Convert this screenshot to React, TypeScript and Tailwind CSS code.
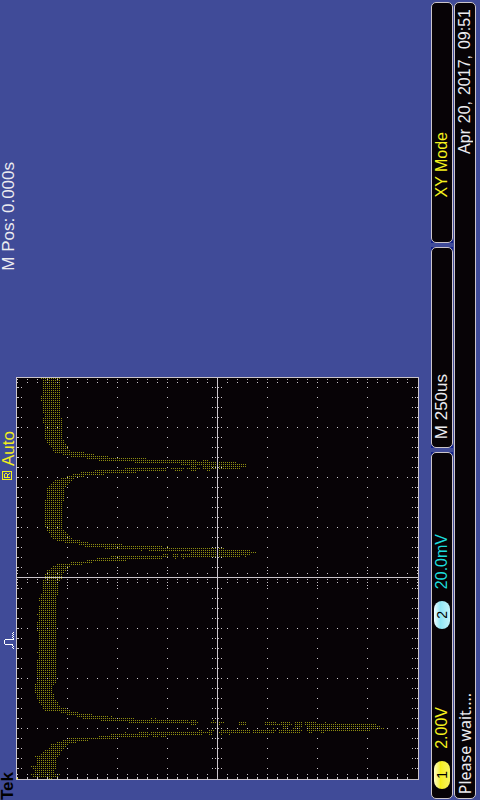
import React from "react";

type Span = [number, number];

/* Lit phosphor dots: row coordinate -> [first, last] runs, dots are two units apart. */
const runs: Record<number, Span[]> = {};
const put = (y: number, ...spans: Span[]) => {
  runs[y] = spans;
};
const fill = (from: number, to: number, a: number, b: number) => {
  for (let y = from; y <= to; y += 2) put(y, [a, b]);
};

fill(378, 394, 43, 59);
put(378, [41, 59]);
fill(396, 400, 41, 59);
fill(402, 412, 43, 59);
fill(414, 418, 45, 59);
fill(418, 422, 43, 61);
fill(424, 438, 45, 61);
put(440, [47, 63]);
put(442, [47, 63]);
put(444, [49, 65]);
put(446, [51, 67]);
put(448, [53, 67]);
put(450, [53, 69]);
put(452, [55, 83]);
put(454, [63, 93]);
put(456, [71, 107]);
put(458, [87, 145]);
put(460, [99, 195], [203, 207]);
put(462, [135, 235]);
put(464, [181, 245]);
put(466, [191, 195], [203, 245]);
put(468, [125, 165], [171, 183], [187, 199], [203, 239]);
put(470, [95, 165], [175, 181], [191, 195], [207, 209]);
put(472, [81, 135]);
put(474, [73, 103]);
put(476, [67, 83]);
put(478, [61, 73]);
put(480, [55, 71]);
put(482, [53, 69]);
put(484, [51, 67]);
put(486, [49, 65]);
fill(488, 498, 47, 63);
fill(500, 526, 45, 61);
put(500, [45, 63]);
put(528, [47, 61]);
put(530, [47, 63]);
put(532, [49, 65]);
put(534, [51, 67]);
put(536, [51, 69]);
put(538, [53, 71]);
put(540, [57, 79]);
put(542, [65, 87]);
put(544, [79, 121]);
put(546, [85, 161], [167, 167]);
put(548, [105, 223]);
put(550, [141, 141], [149, 249]);
put(552, [191, 255]);
put(554, [163, 167], [173, 177], [181, 249]);
put(556, [111, 167], [173, 177], [181, 239], [245, 245]);
put(558, [97, 161], [175, 175], [183, 183]);
put(560, [87, 125]);
put(562, [71, 91]);
put(564, [57, 81]);
put(566, [53, 69]);
put(568, [51, 67]);
put(570, [47, 65]);
put(572, [47, 63]);
fill(574, 578, 45, 61);
fill(580, 592, 43, 57);
put(580, [43, 59]);
put(594, [41, 57]);
put(596, [41, 55]);
fill(598, 600, 39, 55);
fill(602, 604, 41, 55);
fill(606, 612, 39, 55);
put(614, [37, 55]);
fill(616, 620, 39, 55);
fill(622, 630, 37, 55);
fill(632, 650, 39, 55);
fill(652, 682, 37, 55);
fill(654, 658, 39, 55);
fill(684, 692, 35, 51);
put(684, [35, 53]);
put(694, [37, 53]);
fill(696, 698, 37, 53);
put(700, [39, 55]);
put(702, [39, 57]);
put(704, [41, 57]);
put(706, [43, 59]);
put(708, [43, 67]);
put(710, [45, 69]);
put(712, [61, 77]);
put(714, [67, 91]);
put(716, [77, 107], [111, 111]);
put(718, [83, 133], [151, 151], [155, 155]);
put(720, [101, 187], [191, 195], [213, 213]);
put(722, [129, 197], [211, 223], [239, 245], [265, 275], [281, 289], [295, 301], [305, 315], [325, 325], [335, 335]);
put(724, [191, 195], [217, 219], [239, 245], [265, 291], [295, 301], [305, 375]);
put(726, [283, 287], [295, 301], [307, 379]);
put(728, [273, 273], [283, 287], [293, 299], [307, 383]);
put(730, [199, 201], [209, 213], [221, 249], [253, 275], [279, 301], [307, 369]);
put(732, [125, 125], [139, 147], [151, 211], [217, 249], [253, 273], [279, 299], [309, 311], [321, 323]);
put(734, [111, 201], [209, 211], [221, 221], [229, 229]);
put(736, [99, 147], [153, 157], [161, 165]);
put(738, [67, 115]);
put(740, [63, 87]);
put(742, [57, 75]);
put(744, [51, 67]);
put(746, [51, 65]);
put(748, [49, 63]);
put(750, [45, 61]);
put(752, [43, 59]);
put(754, [41, 59]);
put(756, [35, 57]);
fill(758, 764, 37, 55);
put(766, [31, 55]);
put(768, [33, 55]);
fill(770, 772, 35, 53);
put(774, [31, 59]);
put(776, [33, 57]);
put(778, [47, 51]);

const px = (x: number, y: number) => `M${x} ${y}h1v1h-1z`;

const traceParts: string[] = [];
for (const key of Object.keys(runs)) {
  const y = Number(key);
  for (const [a, b] of runs[y]) for (let x = a; x <= b; x += 2) traceParts.push(px(x, y));
}

const minorX = Array.from({ length: 40 }, (_, i) => 17 + i * 10);
const minorY = Array.from({ length: 40 }, (_, i) => (i <= 20 ? 377 : 378) + i * 10).slice(1);
const majorX = [67, 117, 167, 267, 317, 367];
const majorY = [427, 477, 527, 628, 678, 728];

const gridParts: string[] = [];
for (const y of minorY) {
  for (const x of [17, 18, 21, 212, 215, 218, 221, 412, 415, 417]) gridParts.push(px(x, y));
  for (const x of majorX) gridParts.push(px(x, y));
}
for (const x of minorX) {
  for (const y of [379, 382, 573, 579, 582, 774, 777, 778]) gridParts.push(px(x, y));
  for (const y of majorY) gridParts.push(px(x, y));
}
for (const x of [17, ...majorX, 417]) {
  for (const y of [567, 570, 573, 579, 582, 585, 588]) gridParts.push(px(x, y));
}

const tracePath = traceParts.join("");
const gridPath = gridParts.join("");

function Side({ children, className = "" }: { children: React.ReactNode; className?: string }) {
  return (
    <span className={`rotate-180 whitespace-pre [writing-mode:vertical-rl] ${className}`}>{children}</span>
  );
}

function Graticule() {
  return (
    <svg
      role="img"
      aria-label="XY waveform display"
      className="block h-[403px] w-[403px] shrink-0"
      viewBox="16 377 403 403"
      shapeRendering="crispEdges"
    >
      <rect x="16" y="377" width="403" height="403" fill="#cbc5cb" />
      <rect x="17" y="378" width="401" height="401" fill="#070306" />
      <path d={tracePath} fill="#8d8c10" />
      <path d={gridPath} fill="#cbc5cb" />
      <path d="M217 378h1v401h-1zM17 577h401v1h-401z" fill="#cbc5cb" />
      <path d="M17 778h1v1h-1z" fill="#f4ef1c" />
    </svg>
  );
}

function Channel({ id, scale, pill, text }: { id: string; scale: string; pill: string; text: string }) {
  return (
    <div className="flex h-40 flex-col-reverse items-center gap-3">
      <span className={`flex h-7 w-4 items-center justify-center rounded-full text-sm leading-4 text-black ${pill}`}>
        <Side>{id}</Side>
      </span>
      <Side className={text}>{scale}</Side>
    </div>
  );
}

const box =
  "flex h-full w-full flex-col-reverse items-center rounded-[5px] border border-[#cbc5cb] bg-[#070306]";

export default function App() {
  return (
    <main className="flex h-screen w-full overflow-hidden bg-[#404b98] font-['Liberation_Sans',sans-serif] text-base leading-5 text-[#ececf0]">
      <header className="flex w-4 shrink-0 flex-col-reverse items-start text-[17px] leading-[18px]">
        <Side className="h-8 text-[17px] leading-4 font-bold text-black">Tek</Side>
        <svg
          className="mb-[118px] h-[18px] w-4 shrink-0"
          viewBox="0 632 16 18"
          shapeRendering="crispEdges"
          aria-hidden="true"
        >
          <path
            d="M13 632h1v1h-1zM12 633h1v1h-1zM13 634h1v1h-1zM12 635h1v1h-1zM13 636h1v1h-1zM12 637h1v1h-1zM13 638h1v1h-1zM5 639h9v1H5zM4 640h1v4H4zM5 644h8v1H5zM12 645h1v1h-1zM13 646h1v1h-1zM12 647h1v1h-1zM13 648h1v1h-1z"
            fill="#fff"
          />
        </svg>
        <div className="mb-[152px] flex flex-col-reverse items-start gap-[5px] text-[#f4f01c]">
          <svg className="h-[9px] w-4 shrink-0" viewBox="0 471 16 9" shapeRendering="crispEdges" aria-hidden="true">
            <path d="M2 471h10v9H2zM3 472v7h8v-7z" fillRule="evenodd" fill="#f4f01c" />
            <path d="M4 477h6v1H4zM4 474h1v3H4zM5 473h2v1H5zM7 474h1v3H7zM8 474h1v1H8zM9 473h1v1H9z" fill="#f4f01c" />
          </svg>
          <Side className="h-9">Auto</Side>
        </div>
        <Side className="mb-[159px]">M Pos: 0.000s</Side>
      </header>

      <section className="flex min-w-0 flex-1 flex-col justify-end pb-5">
        <Graticule />
      </section>

      <aside className="flex shrink-0 gap-px pt-[2px] pr-1 pb-px">
        <div className="flex w-[22px] flex-col gap-1">
          <div className="min-h-0 flex-[241] bg-linear-to-t from-[#12218a] from-50% to-[#404b98] to-50%">
            <div className={`${box} pb-11`}>
              <Side className="text-[#f4f01c]">XY Mode</Side>
            </div>
          </div>
          <div className="min-h-0 flex-[202] bg-[#12218a]">
            <div className={`${box} pb-2`}>
              <Side className="text-[17px]">M 250us</Side>
            </div>
          </div>
          <div className="min-h-0 flex-[347] bg-linear-to-b from-[#12218a] from-50% to-[#404b98] to-50%">
            <div className={`${box} pb-[9px]`}>
              <Channel
                id="1"
                scale="2.00V"
                pill="bg-linear-to-r from-[#fffdc0] via-[#f4ee18] via-40% to-[#f8f45c]"
                text="text-[#f4f01c]"
              />
              <Channel
                id="2"
                scale="20.0mV"
                pill="bg-linear-to-r from-[#eefcff] via-[#8fe6f4] via-40% to-[#c4f4fb]"
                text="text-[#1cdcdc]"
              />
            </div>
          </div>
        </div>
        <div className={`${box} w-[22px] justify-between pt-1.5 pb-1`}>
          <Side className="font-['Noto_Sans','Liberation_Sans',sans-serif]">Please wait....</Side>
          <time className="flex flex-col-reverse gap-1.5" dateTime="2017-04-20T09:51">
            <Side>Apr</Side>
            <Side>20,</Side>
            <Side>2017,</Side>
            <Side>09:51</Side>
          </time>
        </div>
      </aside>
    </main>
  );
}
